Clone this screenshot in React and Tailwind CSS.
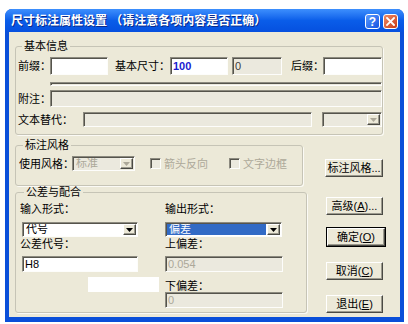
const sunken =
  'border border-t-[#8c8a7f] border-l-[#8c8a7f] border-r-[#fdfdfb] border-b-[#fdfdfb] shadow-[inset_1px_1px_0_#55544c]';
const raised =
  'border border-t-white border-l-white border-r-[#4a4a44] border-b-[#4a4a44] shadow-[inset_-1px_-1px_0_#9c9a8e] bg-[#ece9d8]';

function Label({ text, className = '', muted = false }) {
  return (
    <div className={`h-[12px] leading-[12px] whitespace-nowrap ${muted ? 'text-[#aca899]' : 'text-black'} ${className}`}>
      {text}
      <span className="inline-block w-[7px] overflow-visible">：</span>
    </div>
  );
}

function Box({ className = '', children, disabled = false }) {
  return (
    <div
      className={`${sunken} ${disabled ? 'bg-[#ebe9de] text-[#aca899]' : 'bg-white text-black'} flex items-center pl-[2px] overflow-hidden leading-none ${className}`}
    >
      {children}
    </div>
  );
}

function Arrow({ disabled = false }) {
  return (
    <div className={`${raised} w-[13px] h-full shrink-0 flex items-center justify-center`}>
      <svg width="7" height="4" viewBox="0 0 7 4">
        <path d="M0 0h7L3.5 4z" fill={disabled ? '#aca899' : '#000'} />
      </svg>
    </div>
  );
}

function Combo({ className = '', children, disabled = false, selected = false }) {
  return (
    <div className={`${sunken} ${disabled ? 'bg-[#ebe9de]' : 'bg-white'} flex items-stretch p-[1px] ${className}`}>
      <div
        className={`flex-1 flex items-center pl-[2px] mr-[1px] overflow-hidden leading-none whitespace-nowrap ${
          selected ? 'bg-[#316ac5] text-white' : disabled ? 'text-[#aca899]' : 'text-black'
        }`}
      >
        {children}
      </div>
      <Arrow disabled={disabled} />
    </div>
  );
}

function Check({ label }) {
  return (
    <div className="flex items-center">
      <div className={`${sunken} w-[11px] h-[11px] bg-[#ebe9de]`} />
      <span className="ml-[3px] leading-[12px] text-[#aca899] whitespace-nowrap">{label}</span>
    </div>
  );
}

function Button({ children, primary = false, className = '' }) {
  if (primary) {
    return (
      <div className={`border border-black ${className}`}>
        <div className={`${raised} w-full h-full flex items-center justify-center whitespace-nowrap leading-none`}>{children}</div>
      </div>
    );
  }
  return (
    <div className={`${raised} flex items-center justify-center whitespace-nowrap leading-none ${className}`}>{children}</div>
  );
}

function Group({ title, className = '', children }) {
  return (
    <fieldset className={`border border-[#c6c4b6] rounded-[3px] shadow-[1px_1px_0_#fbfaf5] ${className}`}>
      <legend className="ml-[4px] px-[2px] h-[12px] leading-[12px]">{title}</legend>
      {children}
    </fieldset>
  );
}

function TitleBar() {
  return (
    <div className="h-[23px] flex items-center pl-[6px] pr-[6px] rounded-t-[7px] bg-linear-to-b from-[#3d8ffd] via-[#0a5de9] to-[#0650df]">
      <div className="flex-1 text-white font-bold text-[12px] leading-[14px] [text-shadow:1px_1px_0_#0a2a8a] whitespace-nowrap">
        尺寸标注属性设置 （请注意各项内容是否正确）
      </div>
      <div className="flex items-center gap-[3px] mt-[2px]">
        <div className="w-[15px] h-[15px] rounded-[3px] border border-white bg-linear-to-br from-[#5c9bff] to-[#1550e0] flex items-center justify-center text-white font-bold text-[12px] leading-none">
          ?
        </div>
        <div className="w-[15px] h-[15px] rounded-[3px] border border-white bg-linear-to-br from-[#ef8a66] to-[#c8380e] flex items-center justify-center">
          <svg width="9" height="9" viewBox="0 0 9 9">
            <path d="M1 1l7 7M8 1L1 8" stroke="#fff" strokeWidth="1.8" strokeLinecap="square" />
          </svg>
        </div>
      </div>
    </div>
  );
}

export default function App() {
  return (
    <div className="w-[408px] h-[324px] bg-white pt-[9px] pl-[5px] font-['Liberation_Sans','Noto_Sans_CJK_SC',sans-serif] text-[11px]">
      <div className="w-[399px] h-[313px] flex flex-col rounded-t-[7px] bg-[#0a4fd9]">
        <TitleBar />
        <div className="flex-1 mx-[4px] mb-[5px] bg-[#ece9d8] pl-[6px] pt-[8px] flex flex-col">
          {/* 基本信息 */}
          <Group title="基本信息" className="w-[368px] h-[95px] pl-[2px]">
            <div className="mt-[5px] h-[18px] flex items-center">
              <Label text="前缀" className="w-[32px]" />
              <Box className="w-[58px] h-full" />
              <Label text="基本尺寸" className="ml-[7px] w-[55px]" />
              <Box className="w-[58px] h-full">
                <span className="text-[#1a1ad0] font-bold">100</span>
              </Box>
              <Box disabled className="ml-[4px] w-[50px] h-full">
                <span className="text-[#3c3c3c]">0</span>
              </Box>
              <Label text="后缀" className="ml-[9px] w-[32px]" />
              <Box className="w-[59px] h-full" />
            </div>
            <div className={`${sunken} mt-[7px] ml-[32px] w-[332px] h-[4px] bg-[#ebe9de]`} />
            <div className="mt-[4px] h-[17px] flex items-center">
              <Label text="附注" className="w-[32px]" />
              <Box disabled className="w-[332px] h-full" />
            </div>
            <div className="mt-[5px] h-[15px] flex items-center">
              <Label text="文本替代" className="w-[65px]" />
              <Box disabled className="w-[229px] h-full" />
              <Combo disabled className="ml-[10px] w-[60px] h-full" />
            </div>
          </Group>

          {/* 标注风格 */}
          <div className="mt-[4px] flex items-start">
            <Group title="标注风格" className="w-[288px] h-[47px] pl-[3px]">
              <div className="mt-[5px] h-[15px] flex items-center">
                <Label text="使用风格" className="w-[53px]" />
                <Combo disabled className="w-[63px] h-full">
                  标准
                </Combo>
                <div className="ml-[15px]">
                  <Check label="箭头反向" />
                </div>
                <div className="ml-[21px]">
                  <Check label="文字边框" />
                </div>
              </div>
            </Group>
            <Button className="ml-[22px] mt-[20px] w-[58px] h-[18px]">标注风格...</Button>
          </div>

          {/* 公差与配合 */}
          <div className="flex items-start">
            <Group title="公差与配合" className="w-[292px] h-[127px] pl-[4px]">
              <div className="flex">
                <div className="w-[145px] flex flex-col">
                  <Label text="输入形式" className="mt-[5px]" />
                  <Combo className="mt-[7px] ml-[2px] w-[116px] h-[15px]">代号</Combo>
                  <Label text="公差代号" className="mt-[1px]" />
                  <Box className="mt-[6px] ml-[2px] w-[116px] h-[16px]">H8</Box>
                  <div className="mt-[5px] ml-[68px] w-[71px] h-[15px] bg-white" />
                </div>
                <div className="w-[118px] flex flex-col">
                  <Label text="输出形式" className="mt-[5px]" />
                  <Combo selected className="mt-[7px] w-[117px] h-[15px]">
                    偏差
                  </Combo>
                  <Label text="上偏差" className="mt-[1px]" />
                  <Box disabled className="mt-[6px] w-[118px] h-[16px]">
                    0.054
                  </Box>
                  <Label text="下偏差" className="mt-[8px]" />
                  <Box disabled className="w-[118px] h-[16px]">
                    0
                  </Box>
                </div>
              </div>
            </Group>
            <div className="ml-[19px] flex flex-col">
              <Button className="mt-[11px] w-[57px] h-[18px]">
                高级(<span className="underline">A</span>)...
              </Button>
              <Button primary className="mt-[12px] w-[60px] h-[20px]">
                确定(<span className="underline">O</span>)
              </Button>
              <Button className="mt-[15px] w-[57px] h-[18px]">
                取消(<span className="underline">C</span>)
              </Button>
              <Button className="mt-[15px] w-[57px] h-[18px]">
                退出(<span className="underline">E</span>)
              </Button>
            </div>
          </div>
        </div>
      </div>
    </div>
  );
}
